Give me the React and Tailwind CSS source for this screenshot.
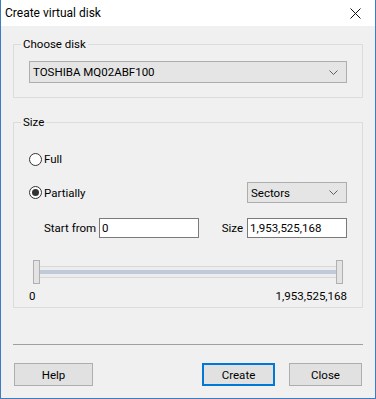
import React from 'react';

const Chevron = () => (
  <svg width="9" height="5" viewBox="0 0 9 5" className="shrink-0">
    <path d="M0.5 0.5 L4.5 4.5 L8.5 0.5" fill="none" stroke="#606060" strokeWidth="1" />
  </svg>
);

const Radio = ({ checked }) => (
  <span className="w-[13px] h-[13px] rounded-full border border-[#333333] bg-white flex items-center justify-center shrink-0">
    {checked && <span className="w-[7px] h-[7px] rounded-full bg-[#333333]" />}
  </span>
);

const Button = ({ children, primary, wide }) => (
  <button
    className={`h-[23px] flex items-center justify-center bg-[#e1e1e1] ${wide ? 'w-[79px]' : 'w-[73px]'} ${
      primary ? 'border-2 border-[#0078d7]' : 'border border-[#adadad]'
    }`}
  >
    {children}
  </button>
);

export default function App() {
  return (
    <div
      className="w-[376px] h-[399px] bg-[#f0f0f0] border-x border-b border-[#3f7cbf] flex flex-col text-[11.5px] leading-[16px] text-black"
      style={{ fontFamily: 'Roboto, "Liberation Sans", sans-serif' }}
    >
      {/* Title bar */}
      <div className="h-[26px] bg-white flex items-center justify-between pl-[4px] pr-[14px] shrink-0 text-[12px]">
        <span>Create virtual disk</span>
        <svg width="11" height="11" viewBox="0 0 11 11">
          <path d="M0.5 0.5 L10.5 10.5 M10.5 0.5 L0.5 10.5" stroke="#111" strokeWidth="1" />
        </svg>
      </div>

      <div className="flex flex-col px-[12px]">
        {/* Choose disk */}
        <fieldset className="mt-[10px] border border-[#dcdcdc]">
          <legend className="ml-[7px] px-[2px]">Choose disk</legend>
          <div className="px-[15px] pb-[14px]">
            <div className="mt-[9px] h-[22px] bg-[#e5e5e5] border border-[#adadad] flex items-center justify-between pl-[3px] pr-[8px]">
              <span>TOSHIBA MQ02ABF100</span>
              <Chevron />
            </div>
          </div>
        </fieldset>

        {/* Size */}
        <fieldset className="mt-[16px] border border-[#dcdcdc]">
          <legend className="ml-[7px] px-[2px]">Size</legend>
          <div className="px-[15px] pb-[3px]">
            <div className="mt-[21px] h-[16px] flex items-center gap-[2px]">
              <Radio />
              <span>Full</span>
            </div>

            <div className="mt-[15px] h-[21px] flex items-center justify-between">
              <div className="flex items-center gap-[2px]">
                <Radio checked />
                <span>Partially</span>
              </div>
              <div className="w-[100px] h-[21px] bg-[#e5e5e5] border border-[#adadad] flex items-center justify-between pl-[3px] pr-[8px]">
                <span>Sectors</span>
                <Chevron />
              </div>
            </div>

            <div className="mt-[15px] h-[20px] flex items-center">
              <span className="ml-[15px] w-[55px] whitespace-nowrap">Start from</span>
              <div className="w-[100px] h-[20px] bg-white border border-[#7a7a7a] flex items-center px-[2px]">0</div>
              <span className="ml-auto mr-[4px]">Size</span>
              <div className="w-[100px] h-[20px] bg-white border border-[#7a7a7a] flex items-center px-[2px]">1,953,525,168</div>
            </div>

            {/* Slider */}
            <div className="mt-[22px] h-[24px] flex items-center px-[4px]">
              <div className="w-[7px] h-[24px] bg-[#e3e3e3] border border-[#b0b0b0] shrink-0" />
              <div className="flex-1 h-[12px] border-y border-[#d8d8d8] bg-[#ececec] flex items-center">
                <div className="w-full h-[4px] bg-[#bfcbda]" />
              </div>
              <div className="w-[7px] h-[24px] bg-[#e3e3e3] border border-[#b0b0b0] shrink-0" />
            </div>

            <div className="mt-[4px] h-[16px] flex items-center justify-between">
              <span>0</span>
              <span>1,953,525,168</span>
            </div>
          </div>
        </fieldset>

        <div className="mt-[36px] h-px bg-[#a0a0a0]" />

        <div className="mt-[18px] flex items-center">
          <span className="ml-[1px]"><Button wide>Help</Button></span>
          <span className="ml-auto mr-[14px]"><Button primary>Create</Button></span>
          <span className="mr-px"><Button>Close</Button></span>
        </div>
      </div>
    </div>
  );
}
